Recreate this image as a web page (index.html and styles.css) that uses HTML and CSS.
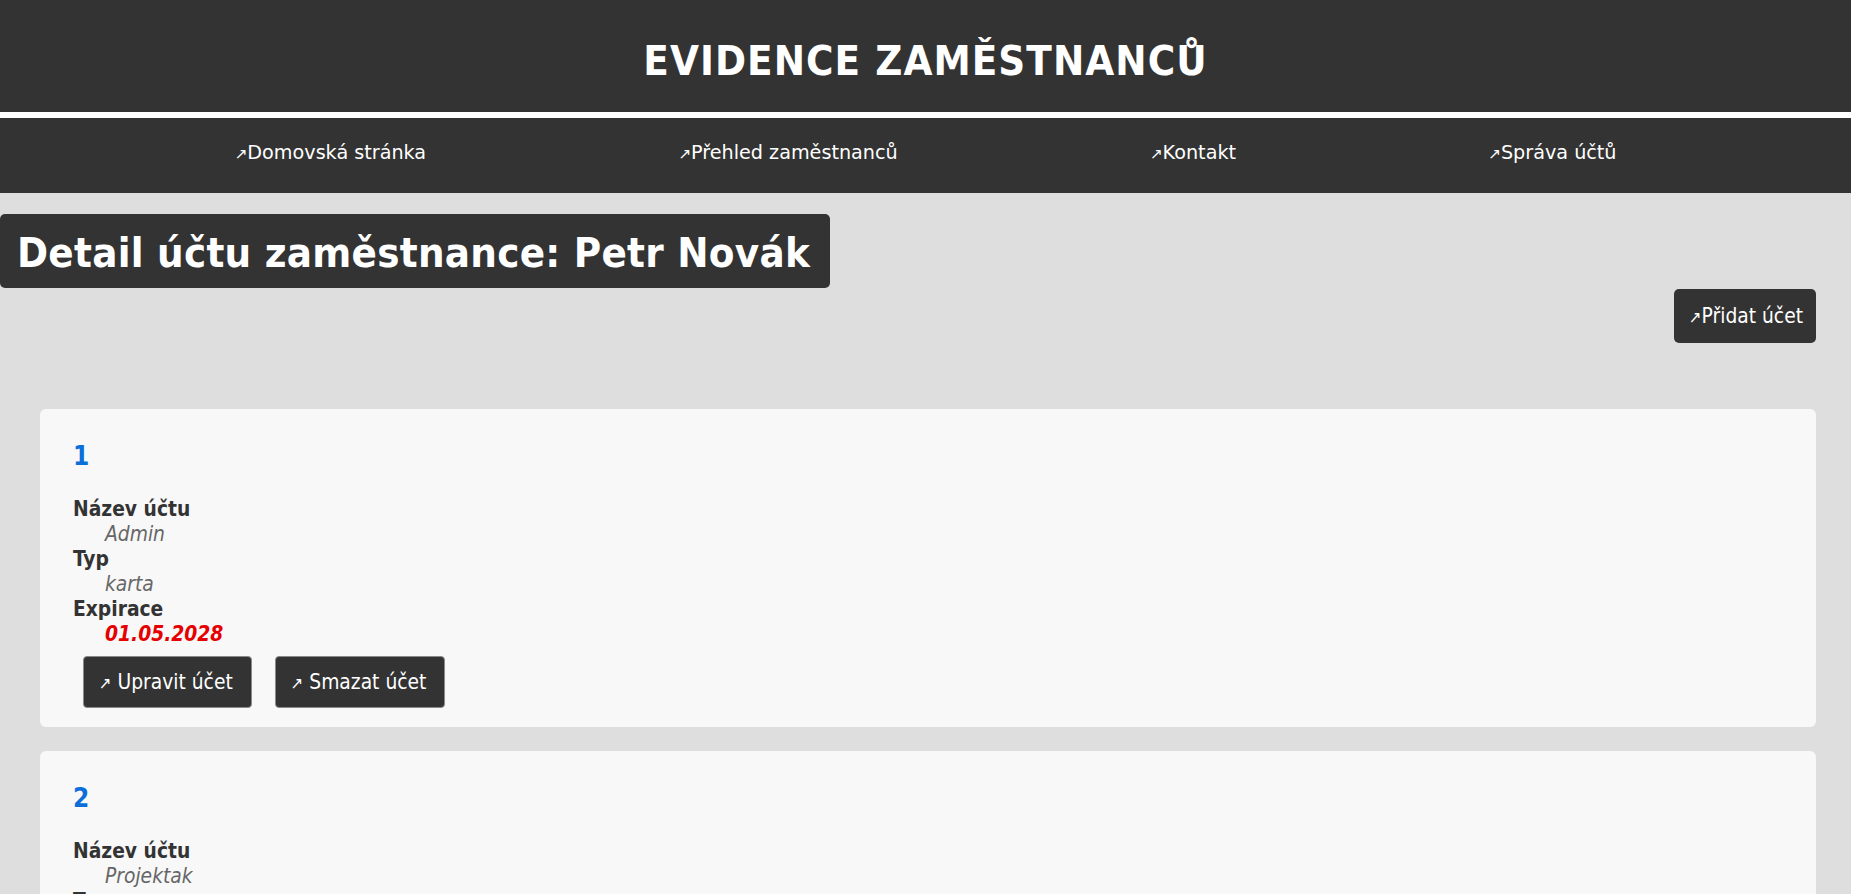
FILE: index.html
```html
<!DOCTYPE html>
<html lang="cs">
<head>
<meta charset="utf-8">
<title>Evidence zaměstnanců</title>
<link rel="stylesheet" href="styles.css">
</head>
<body>
<header class="site-header">
  <h1 class="site-title">EVIDENCE ZAMĚSTNANCŮ</h1>
</header>
<nav class="main-nav">
  <a class="nav-link" href="#"><span class="arrow">↗</span>Domovská stránka</a>
  <a class="nav-link" href="#"><span class="arrow">↗</span>Přehled zaměstnanců</a>
  <a class="nav-link" href="#"><span class="arrow">↗</span>Kontakt</a>
  <a class="nav-link" href="#"><span class="arrow">↗</span>Správa účtů</a>
</nav>
<main class="content">
  <h2 class="page-title">Detail účtu zaměstnance: Petr Novák</h2>
  <div class="page-actions">
    <a class="btn btn-add" href="#"><span class="arrow">↗</span>Přidat účet</a>
  </div>
  <section class="cards">
    <article class="card">
      <h3 class="card-number">1</h3>
      <dl class="card-details">
        <dt>Název účtu</dt>
        <dd>Admin</dd>
        <dt>Typ</dt>
        <dd>karta</dd>
        <dt>Expirace</dt>
        <dd class="expiry">01.05.2028</dd>
      </dl>
      <div class="card-actions">
        <a class="btn btn-card" href="#"><span class="arrow">↗</span> Upravit účet</a>
        <a class="btn btn-card" href="#"><span class="arrow">↗</span> Smazat účet</a>
      </div>
    </article>
    <article class="card">
      <h3 class="card-number">2</h3>
      <dl class="card-details">
        <dt>Název účtu</dt>
        <dd>Projektak</dd>
        <dt>Typ</dt>
        <dd>heslo</dd>
        <dt>Expirace</dt>
        <dd class="expiry">01.09.2027</dd>
      </dl>
      <div class="card-actions">
        <a class="btn btn-card" href="#"><span class="arrow">↗</span> Upravit účet</a>
        <a class="btn btn-card" href="#"><span class="arrow">↗</span> Smazat účet</a>
      </div>
    </article>
  </section>
</main>
</body>
</html>
```

FILE: styles.css
```css
* {
  box-sizing: border-box;
}

body {
  margin: 0;
  background: #dedede;
  font-family: "DejaVu Sans Condensed", "DejaVu Sans", sans-serif;
  color: #333;
}

a {
  text-decoration: none;
  color: inherit;
}

.site-header {
  background: #333;
  height: 118px;
  border-bottom: 6px solid #fff;
}

.site-title {
  margin: 0;
  padding-top: 36px;
  color: #fff;
  font-size: 41.6px;
  line-height: 50px;
  font-weight: bold;
  letter-spacing: 1.05px;
  text-align: center;
}

.main-nav {
  background: #333;
  height: 75px;
  padding-top: 23px;
  display: flex;
  justify-content: center;
  gap: 252px;
}

.nav-link {
  color: #fff;
  font-family: "DejaVu Sans", sans-serif;
  font-size: 19.2px;
  line-height: 23px;
}

.arrow {
  font-size: 0.8em;
}

.content {
  padding-top: 21px;
}

.page-title {
  display: inline-block;
  margin: 0;
  height: 74px;
  padding: 4px 20px 0 17px;
  background: #333;
  color: #fff;
  font-size: 41.6px;
  line-height: 70px;
  font-weight: bold;
  letter-spacing: 0.26px;
  border-radius: 5px;
}

.page-actions {
  display: flex;
  justify-content: flex-end;
  margin: 1px 35px 0 0;
}

.btn {
  display: inline-block;
  background: #333;
  color: #fff;
  border-radius: 5px;
}

.btn-add {
  height: 54px;
  padding: 15px 13px 0 15px;
  font-size: 20.8px;
  line-height: 25px;
}

.cards {
  margin-top: 66px;
  padding: 0 35px 0 40px;
  display: flex;
  flex-direction: column;
  gap: 24px;
}

.card {
  background: #f8f8f8;
  border-radius: 6px;
  padding: 32px 33px 19px;
}

.card-number {
  margin: 0 0 25px;
  color: #0b6fd9;
  font-size: 26px;
  line-height: 31px;
  font-weight: bold;
}

.card-details {
  margin: 0;
  font-size: 20.8px;
  line-height: 25px;
}

.card-details dt {
  font-weight: bold;
  color: #333;
}

.card-details dd {
  margin-left: 32px;
  font-style: italic;
  color: #666;
}

.card-details dd.expiry {
  color: #e60000;
  font-weight: bold;
}

.card-actions {
  margin-top: 9px;
  padding-left: 10px;
  display: flex;
  gap: 23px;
}

.btn-card {
  height: 52px;
  padding: 13px 18px 0 15px;
  border: 1px solid #8a8a8a;
  border-radius: 4px;
  font-size: 20.8px;
  line-height: 25px;
}
```
